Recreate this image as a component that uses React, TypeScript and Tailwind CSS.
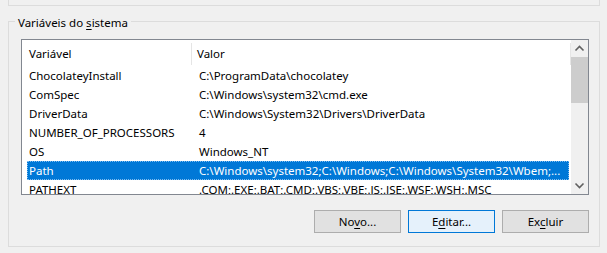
import React from "react";

const rows: [string, string][] = [
  ["ChocolateyInstall", "C:\\ProgramData\\chocolatey"],
  ["ComSpec", "C:\\Windows\\system32\\cmd.exe"],
  ["DriverData", "C:\\Windows\\System32\\Drivers\\DriverData"],
  ["NUMBER_OF_PROCESSORS", "4"],
  ["OS", "Windows_NT"],
  ["Path", "C:\\Windows\\system32;C:\\Windows;C:\\Windows\\System32\\Wbem;..."],
  ["PATHEXT", ".COM;.EXE;.BAT;.CMD;.VBS;.VBE;.JS;.JSE;.WSF;.WSH;.MSC"],
];

const selected = 5;

function Chevron({ up }: { up?: boolean }) {
  return (
    <svg width="17" height="17" viewBox="0 0 17 17">
      <path
        d={up ? "M4.5 10.5 L8.5 6.5 L12.5 10.5" : "M4.5 6.5 L8.5 10.5 L12.5 6.5"}
        fill="none"
        stroke="#606060"
        strokeWidth="1.6"
      />
    </svg>
  );
}

function Button({ children, focused }: { children: React.ReactNode; focused?: boolean }) {
  return (
    <button
      className={`w-[87px] h-[23px] border text-[11.5px] leading-none text-black ${
        focused ? "bg-[#e5f1fb] border-[#0078d7]" : "bg-[#e1e1e1] border-[#adadad]"
      }`}
    >
      {children}
    </button>
  );
}

export default function App() {
  return (
    <div
      className="w-[607px] h-[253px] bg-[#f0f0f0] overflow-hidden text-[11.5px] text-black"
      style={{ fontFamily: '"Noto Sans", "Open Sans", sans-serif' }}
    >
      {/* end of the box above */}
      <div className="ml-[8px] w-[592px] h-[6px] border-x border-b border-[#dcdcdc]" />

      {/* Variáveis do sistema */}
      <div className="relative ml-[8px] mt-[15px] w-[592px] h-[226px] border border-[#dcdcdc]">
        <div className="absolute -top-[7px] left-[6px] px-[3px] bg-[#f0f0f0] leading-[16px]">
          Variáveis do <span className="underline underline-offset-2">s</span>istema
        </div>

        {/* list view */}
        <div className="ml-[12px] mt-[17px] w-[568px] h-[156px] border border-[#828790] bg-white flex">
          <div className="flex-1 overflow-hidden">
            {/* header */}
            <div className="h-[26px] flex items-center pt-[1px]">
              <div className="w-[169px] pl-[7px]">Variável</div>
              <div className="w-px h-[22px] bg-[#e5e5e5]" />
              <div className="flex-1 pl-[5px]">Valor</div>
              <div className="w-px h-[22px] bg-[#e5e5e5]" />
            </div>
            {rows.map(([name, value], i) => (
              <div
                key={name}
                className={`ml-[5px] mr-[2px] h-[19px] flex items-center pl-[2px] whitespace-nowrap ${
                  i === selected
                    ? "bg-[#0078d7] text-white outline-1 outline-dotted outline-[#7fbcf0] -outline-offset-1"
                    : ""
                }`}
              >
                <div className="w-[170px] shrink-0">{name}</div>
                <div>{value}</div>
              </div>
            ))}
          </div>

          {/* scrollbar */}
          <div className="w-[17px] bg-[#f0f0f0] flex flex-col">
            <Chevron up />
            <div className="h-[46px] bg-[#cdcdcd]" />
            <div className="flex-1" />
            <Chevron />
          </div>
        </div>

        {/* buttons */}
        <div className="mt-[15px] mr-[10px] flex justify-end gap-[7px]">
          <Button>
            No<span className="underline underline-offset-2">v</span>o...
          </Button>
          <Button focused>
            E<span className="underline underline-offset-2">d</span>itar...
          </Button>
          <Button>
            Ex<span className="underline underline-offset-2">c</span>luir
          </Button>
        </div>
      </div>
    </div>
  );
}
